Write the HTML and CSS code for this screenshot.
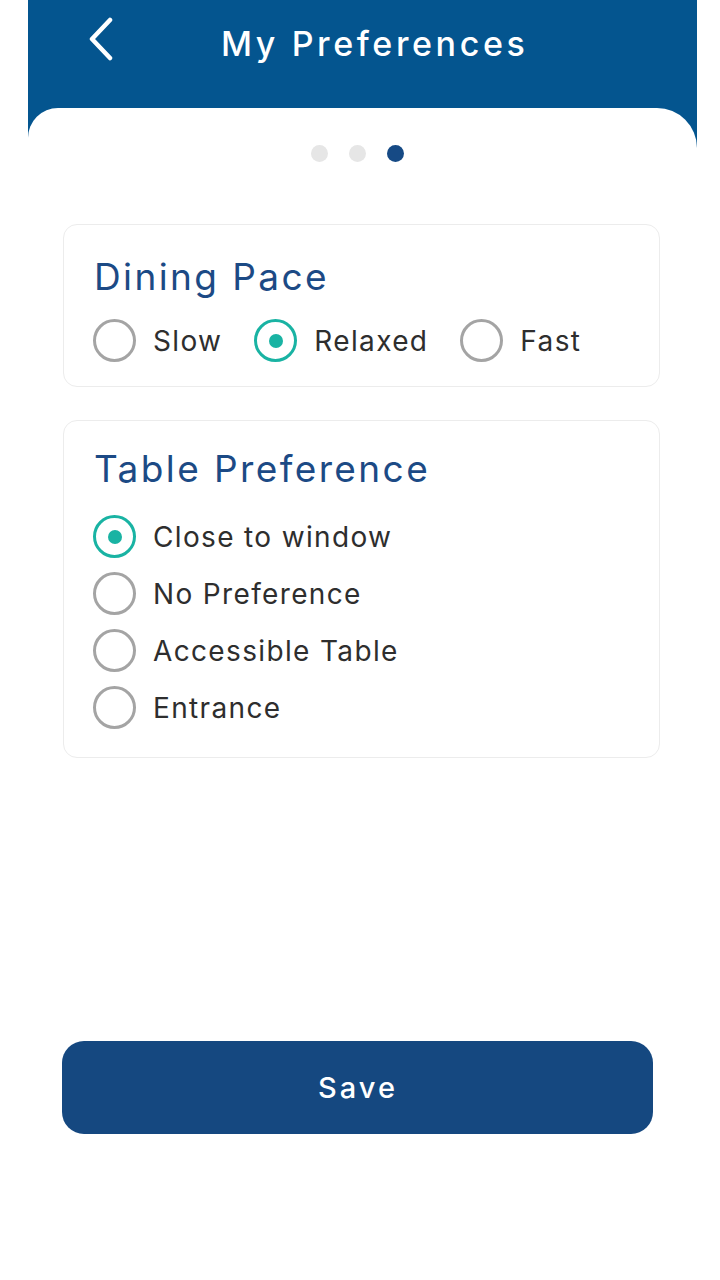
FILE: index.html
```html
<!DOCTYPE html>
<html>
<head>
<meta charset="utf-8">
<link rel="stylesheet" href="styles.css">
</head>
<body>
<div class="frame">
  <header class="topbar">
    <button class="back" aria-label="Back">
      <svg width="28" height="44" viewBox="0 0 28 44"><path d="M22 3 L4 22 L22 41" fill="none" stroke="#fff" stroke-width="4.5" stroke-linecap="round" stroke-linejoin="round"/></svg>
    </button>
    <h1 class="title">My Preferences</h1>
  </header>
  <main class="sheet">
    <div class="dots">
      <span class="dot"></span><span class="dot"></span><span class="dot active"></span>
    </div>
    <section class="card">
      <h2 class="card-title">Dining Pace</h2>
      <div class="row-inline">
        <label class="opt"><span class="radio"></span><span class="lbl">Slow</span></label>
        <label class="opt"><span class="radio on"></span><span class="lbl">Relaxed</span></label>
        <label class="opt"><span class="radio"></span><span class="lbl">Fast</span></label>
      </div>
    </section>
    <section class="card card2">
      <h2 class="card-title">Table Preference</h2>
      <div class="list">
        <label class="opt"><span class="radio on"></span><span class="lbl">Close to window</span></label>
        <label class="opt"><span class="radio"></span><span class="lbl">No Preference</span></label>
        <label class="opt"><span class="radio"></span><span class="lbl">Accessible Table</span></label>
        <label class="opt"><span class="radio"></span><span class="lbl">Entrance</span></label>
      </div>
    </section>
    <div class="spacer"></div>
    <button class="save">Save</button>
  </main>
</div>
</body>
</html>
```

FILE: styles.css
```css
* { box-sizing: border-box; }
html, body { margin: 0; padding: 0; background: #fff; }
body { font-family: Inter, "Noto Sans", sans-serif; }
.frame {
  margin-left: 28px;
  width: 669px;
  height: 1280px;
  background: #04558f;
  display: flex;
  flex-direction: column;
}
.topbar {
  height: 108px;
  display: flex;
  align-items: flex-start;
}
.back {
  background: none;
  border: 0;
  padding: 0;
  margin: 17px 0 0 60px;
  width: 28px;
  height: 44px;
  display: flex;
}
.title {
  margin: 22px 0 0 105px;
  color: #fff;
  font-size: 34px;
  font-weight: 500;
  line-height: 44px;
  letter-spacing: 3.6px;
}
.sheet {
  flex: 1;
  background: #fff;
  border-radius: 30px 40px 0 0;
  display: flex;
  flex-direction: column;
  padding: 37px 37px 146px 35px;
}
.dots {
  display: flex;
  justify-content: center;
  gap: 21px;
  padding-right: 9px;
}
.dot { width: 17px; height: 17px; border-radius: 50%; background: #e6e6e6; }
.dot.active { background: #164a85; }
.card {
  margin-top: 62px;
  border: 1.5px solid #ececec;
  border-radius: 14px;
  height: 163px;
  padding: 28px 29px 0 29px;
}
.card2 { margin-top: 33px; height: 338px; padding-top: 24px; }
.card-title {
  margin: 0 0 0 1px;
  font-size: 37px;
  font-weight: 400;
  line-height: 48px;
  color: #1c4a85;
  letter-spacing: 2.4px;
}
.row-inline { display: flex; gap: 32px; margin-top: 18px; }
.list { display: flex; flex-direction: column; gap: 14px; margin-top: 22px; }
.opt { display: flex; align-items: center; gap: 17px; }
.radio {
  width: 43px; height: 43px; border-radius: 50%;
  border: 3px solid #a4a4a4;
  display: flex; align-items: center; justify-content: center;
  flex: none;
}
.radio.on { border-color: #19b3a3; }
.radio.on::after { content: ""; width: 14px; height: 14px; border-radius: 50%; background: #19b3a3; }
.lbl { font-size: 28px; color: #2e2e2e; letter-spacing: 1.35px; }
.spacer { flex: 1; }
.save {
  width: 591px;
  height: 93px;
  margin-left: -1px;
  border: 0;
  border-radius: 22px;
  background: #154880;
  color: #fff;
  font-family: Inter, "Noto Sans", sans-serif;
  font-size: 29px;
  font-weight: 500;
  letter-spacing: 3px;
  padding-left: 7px;
}
```
